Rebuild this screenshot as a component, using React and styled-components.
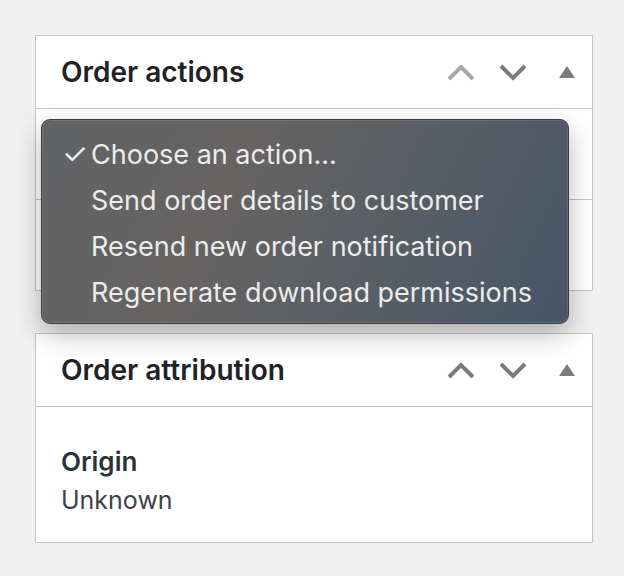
import React from "react";
import styled, { createGlobalStyle } from "styled-components";

const Global = createGlobalStyle`
  html, body { margin: 0; padding: 0; background: #f0f0f1; }
  body { font-family: Inter, "Noto Sans", sans-serif; }
`;

const Page = styled.div`
  width: 624px;
  height: 576px;
  box-sizing: border-box;
  padding: 35px 31px 0 35px;
  display: flex;
  flex-direction: column;
  gap: 42px;
`;

const Panel = styled.section`
  position: relative;
  background: #fff;
  border: 1px solid #c3c4c7;
  box-sizing: border-box;
`;

const Header = styled.div`
  height: 72px;
  border-bottom: 1px solid #c3c4c7;
  display: flex;
  align-items: center;
  padding: 0 17px 0 25px;
`;

const Title = styled.h2`
  flex: 1;
  margin: 0;
  font-size: 28px;
  font-weight: 600;
  color: #1d2327;
  letter-spacing: 0;
`;

const Tools = styled.div`
  display: flex;
  align-items: center;
`;

const IconBtn = styled.span`
  display: flex;
  align-items: center;
  justify-content: center;
  margin-left: ${(p) => p.$gap || 0}px;
  color: ${(p) => (p.$disabled ? "#a7aaad" : "#787c82")};
`;

const Section = styled.div`
  padding: 19px 23px 18px 25px;
  display: flex;
  justify-content: ${(p) => p.$justify || "stretch"};
  & + & { border-top: 1px solid #c3c4c7; }
`;

const FakeSelect = styled.div`
  flex: 1;
  height: 53px;
  border: 2px solid #0a4b78;
  border-radius: 6px;
  box-sizing: border-box;
`;

const Button = styled.div`
  width: 140px;
  height: 53px;
  border: 2px solid #0a4b78;
  background: #2271b1;
  border-radius: 6px;
  box-sizing: border-box;
`;

const Menu = styled.ul`
  position: absolute;
  left: 5px;
  top: 83px;
  width: 528px;
  height: 205px;
  box-sizing: border-box;
  margin: 0;
  padding: 12px 0 10px;
  list-style: none;
  border-radius: 9px;
  border: 1px solid #3a3d40;
  background: linear-gradient(115deg, #616365 0%, #666362 35%, #5a5f64 62%, #47566a 100%);
  box-shadow: 0 10px 26px rgba(0, 0, 0, 0.28), inset 0 0 0 1px rgba(255,255,255,0.12);
  z-index: 5;
`;

const Item = styled.li`
  position: relative;
  height: 46px;
  line-height: 46px;
  padding-left: 49px;
  font-size: 27px;
  color: #ececec;
  white-space: nowrap;
`;

const Check = styled.span`
  position: absolute;
  left: 20px;
  top: -1px;
  font-size: 29px;
`;

const Body = styled.div`
  padding: 35px 25px 22px;
`;

const Label = styled.div`
  font-size: 26px;
  font-weight: 600;
  color: #2c3338;
  line-height: 39px;
`;

const Value = styled.div`
  font-size: 25px;
  color: #3c434a;
  line-height: 39px;
`;

const Up = () => (
  <svg width="28" height="17" viewBox="0 0 28 17">
    <polyline points="2,15 14,3 26,15" fill="none" stroke="currentColor" strokeWidth="4" />
  </svg>
);
const Down = () => (
  <svg width="28" height="17" viewBox="0 0 28 17">
    <polyline points="2,2 14,14 26,2" fill="none" stroke="currentColor" strokeWidth="4" />
  </svg>
);
const Tri = () => (
  <svg width="16" height="12" viewBox="0 0 16 12">
    <polygon points="8,0 16,12 0,12" fill="currentColor" />
  </svg>
);

function PanelHeader({ title, upDisabled }) {
  return (
    <Header>
      <Title>{title}</Title>
      <Tools>
        <IconBtn $disabled={upDisabled}><Up /></IconBtn>
        <IconBtn $gap={24}><Down /></IconBtn>
        <IconBtn $gap={32}><Tri /></IconBtn>
      </Tools>
    </Header>
  );
}

const actions = [
  "Choose an action...",
  "Send order details to customer",
  "Resend new order notification",
  "Regenerate download permissions",
];

export default function App() {
  return (
    <>
      <Global />
      <Page>
        <Panel>
          <PanelHeader title="Order actions" upDisabled />
          <Section><FakeSelect /></Section>
          <Section $justify="flex-end"><Button /></Section>
          <Menu>
            {actions.map((a, i) => (
              <Item key={a}>
                {i === 0 && <Check>✓</Check>}
                {a}
              </Item>
            ))}
          </Menu>
        </Panel>
        <Panel>
          <PanelHeader title="Order attribution" />
          <Body>
            <Label>Origin</Label>
            <Value>Unknown</Value>
          </Body>
        </Panel>
      </Page>
    </>
  );
}
